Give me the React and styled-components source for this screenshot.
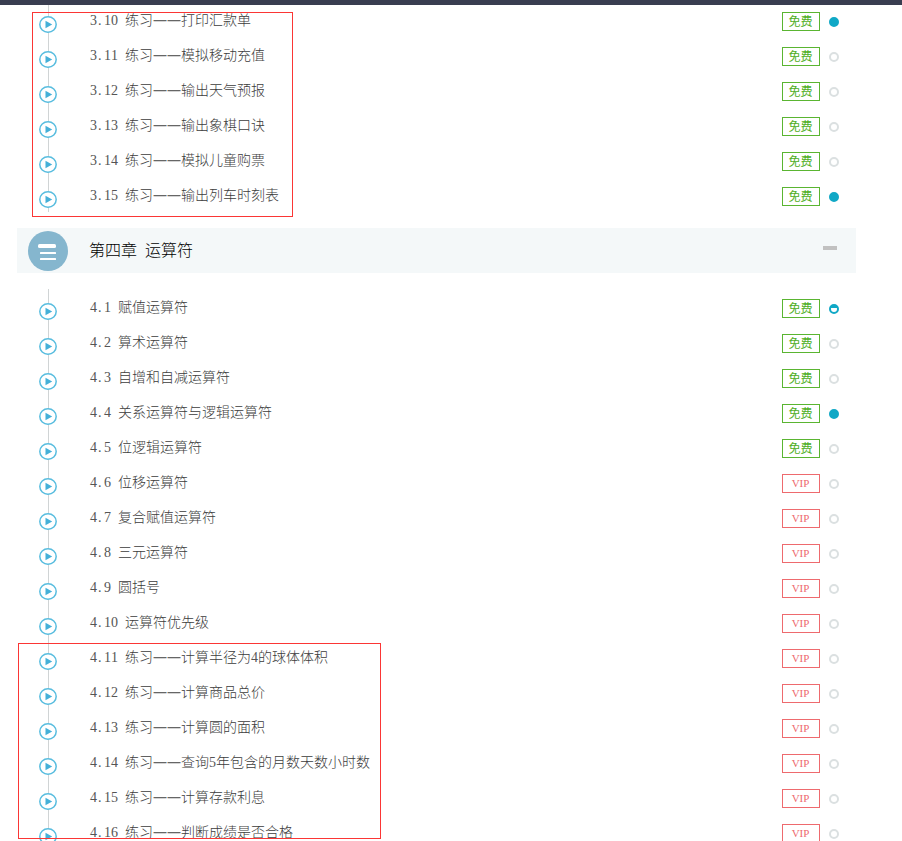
import React, {useState} from "react";
import styled, {createGlobalStyle, css} from "styled-components";

const GlobalStyle = createGlobalStyle`
	* {
		box-sizing: border-box;
	}
	body {
		margin: 0;
		background: #ffffff;
		font-family: "Noto Sans CJK SC", "Liberation Sans", sans-serif;
		font-size: 14px;
		font-weight: 300;
		color: #3c3c3c;
	}
`;

const Page = styled.div`
	height: 100vh;
	overflow: hidden;
	padding: 2px 46px 0 17px;
`;

const TopBar = styled.header`
	position: fixed;
	top: 0;
	left: 0;
	right: 0;
	height: 5px;
	background: #393d50;
	z-index: 1;
`;

const Section = styled.section`
	position: relative;
	margin-bottom: 16px;
`;

const ChapterHead = styled.div`
	display: flex;
	align-items: center;
	height: 45px;
	margin-bottom: 16px;
	padding: 0 19px 0 11px;
	background: #f4f8f9;
`;

const ChapterTitle = styled.h2`
	display: flex;
	flex: 1;
	gap: 8px;
	margin: 0 0 0 21px;
	padding-bottom: 3px;
	font-size: 16px;
	font-weight: 300;
	line-height: 24px;
	color: #000000;
`;

const Toggle = styled.button`
	display: flex;
	padding: 0 0 6px;
	border: 0;
	background: none;
	cursor: pointer;
	&::before {
		content: "";
		width: 14px;
		height: 4px;
		background: #c1c1c1;
	}
`;

const List = styled.ul`
	position: relative;
	margin: 0;
	padding: 0;
	list-style: none;
`;

const Row = styled.li`
	display: flex;
	align-items: flex-start;
	height: 35px;
	padding: 0 17px 0 22px;
`;

const Marker = styled.span`
	height: 100%;
	padding-top: 14px;
	background: linear-gradient(#d0d4d5, #d0d4d5) 9px 0 / 1px 100% no-repeat;
	svg {
		display: block;
	}
`;

const Lesson = styled.a`
	display: flex;
	align-items: baseline;
	flex: 1;
	gap: 7px;
	margin: 7px 0 0 33px;
	line-height: 20px;
	color: inherit;
	text-decoration: none;
	white-space: nowrap;
	&:hover {
		color: #14a7c4;
	}
`;

const Digits = styled.span`
	font-family: "Liberation Serif", serif;
	font-weight: 400;
	font-kerning: none;
	color: #555555;
`;

const Point = styled.span`
	display: inline-block;
	width: 7px;
	padding-left: 1px;
`;

const Dash = styled.span`
	font-family: "Noto Sans", sans-serif;
	font-weight: 400;
	line-height: 1;
	color: #666666;
`;

const Badge = styled.span`
	display: flex;
	align-items: center;
	justify-content: center;
	width: 38px;
	height: 19px;
	margin-top: 10px;
	padding: 0 1px 1px 0;
	border: 1px solid #5ab531;
	font-size: 12px;
	font-weight: 400;
	line-height: 16px;
	color: #4fae24;
	${(props) =>
		props.$vip &&
		css`
			border-color: #ee6a6e;
			font-family: "Liberation Serif", serif;
			font-size: 11px;
			color: #ee6a6e;
		`}
`;

const Status = styled.span`
	width: 10px;
	height: 10px;
	margin: 15px 0 0 9px;
	border: 2px solid #dbe0e1;
	border-radius: 50%;
	${(props) =>
		props.$state === "done" &&
		css`
			border-color: #10a8c6;
			background: #10a8c6;
		`}
	${(props) =>
		props.$state === "half" &&
		css`
			border-color: #10a8c6;
			background: linear-gradient(#10a8c6 2px, #ffffff 2px);
		`}
`;

// red frames drawn over the exercise groups
const Frame = styled.div`
	position: absolute;
	top: ${(props) => props.$top}px;
	left: ${(props) => props.$left}px;
	width: ${(props) => props.$width}px;
	height: ${(props) => props.$height}px;
	border: 1px solid #fb3635;
	pointer-events: none;
`;

const chapterThree = [
	{no: "3.10", name: "练习——打印汇款单", state: "done"},
	{no: "3.11", name: "练习——模拟移动充值"},
	{no: "3.12", name: "练习——输出天气预报"},
	{no: "3.13", name: "练习——输出象棋口诀"},
	{no: "3.14", name: "练习——模拟儿童购票"},
	{no: "3.15", name: "练习——输出列车时刻表", state: "done"},
];

const chapterFour = [
	{no: "4.1", name: "赋值运算符", state: "half"},
	{no: "4.2", name: "算术运算符"},
	{no: "4.3", name: "自增和自减运算符"},
	{no: "4.4", name: "关系运算符与逻辑运算符", state: "done"},
	{no: "4.5", name: "位逻辑运算符"},
	{no: "4.6", name: "位移运算符", vip: true},
	{no: "4.7", name: "复合赋值运算符", vip: true},
	{no: "4.8", name: "三元运算符", vip: true},
	{no: "4.9", name: "圆括号", vip: true},
	{no: "4.10", name: "运算符优先级", vip: true},
	{no: "4.11", name: "练习——计算半径为4的球体体积", vip: true},
	{no: "4.12", name: "练习——计算商品总价", vip: true},
	{no: "4.13", name: "练习——计算圆的面积", vip: true},
	{no: "4.14", name: "练习——查询5年包含的月数天数小时数", vip: true},
	{no: "4.15", name: "练习——计算存款利息", vip: true},
	{no: "4.16", name: "练习——判断成绩是否合格", vip: true},
];

const PlayIcon = () => (
	<svg width="18" height="17" viewBox="0 0 18 17" aria-hidden="true">
		<ellipse cx="9" cy="8.5" rx="8.2" ry="7.7" fill="#ffffff" stroke="#58bddf" strokeWidth="1.5" />
		<path d="M6.5 4.8 L13.2 8.5 L6.5 12.2 Z" fill="#45b0d8" />
	</svg>
);

const MenuIcon = () => (
	<svg width="40" height="40" viewBox="0 0 40 40" aria-hidden="true">
		<circle cx="20" cy="20" r="20" fill="#85b6ce" />
		<rect x="10" y="13" width="18" height="4" rx="1.5" fill="#ffffff" />
		<rect x="12" y="21" width="16" height="2" rx="0.5" fill="#ffffff" />
		<rect x="12" y="27" width="16" height="2" rx="0.5" fill="#ffffff" />
	</svg>
);

function LessonName({text}) {
	return (
		<span>
			{text.split(/(\d+|——)/).map((part, i) => {
				if (i % 2 === 0) return part;
				return part === "——" ? <Dash key={i}>{part}</Dash> : <Digits key={i}>{part}</Digits>;
			})}
		</span>
	);
}

function LessonRow({no, name, vip, state}) {
	const [chapter, index] = no.split(".");

	return (
		<Row>
			<Marker>
				<PlayIcon />
			</Marker>
			<Lesson href="#">
				<Digits>
					{chapter}
					<Point>.</Point>
					{index}
				</Digits>
				<LessonName text={name} />
			</Lesson>
			<Badge $vip={vip}>{vip ? "VIP" : "免费"}</Badge>
			<Status $state={state} />
		</Row>
	);
}

function App() {
	const [open, setOpen] = useState(true);

	return (
		<>
			<GlobalStyle />
			<TopBar />
			<Page lang="zh-CN">
				<Section>
					<List>
						{chapterThree.map((item) => (
							<LessonRow key={item.no} {...item} />
						))}
					</List>
					<Frame $top={10} $left={15} $width={261} $height={205} />
				</Section>
				<Section>
					<ChapterHead>
						<MenuIcon />
						<ChapterTitle>
							<span>第四章</span>
							<span>运算符</span>
						</ChapterTitle>
						<Toggle type="button" aria-label="收起" aria-expanded={open} onClick={() => setOpen(!open)} />
					</ChapterHead>
					{open && (
						<>
							<List>
								{chapterFour.map((item) => (
									<LessonRow key={item.no} {...item} />
								))}
							</List>
							<Frame $top={415} $left={1} $width={363} $height={196} />
						</>
					)}
				</Section>
			</Page>
		</>
	);
}

export default App;
